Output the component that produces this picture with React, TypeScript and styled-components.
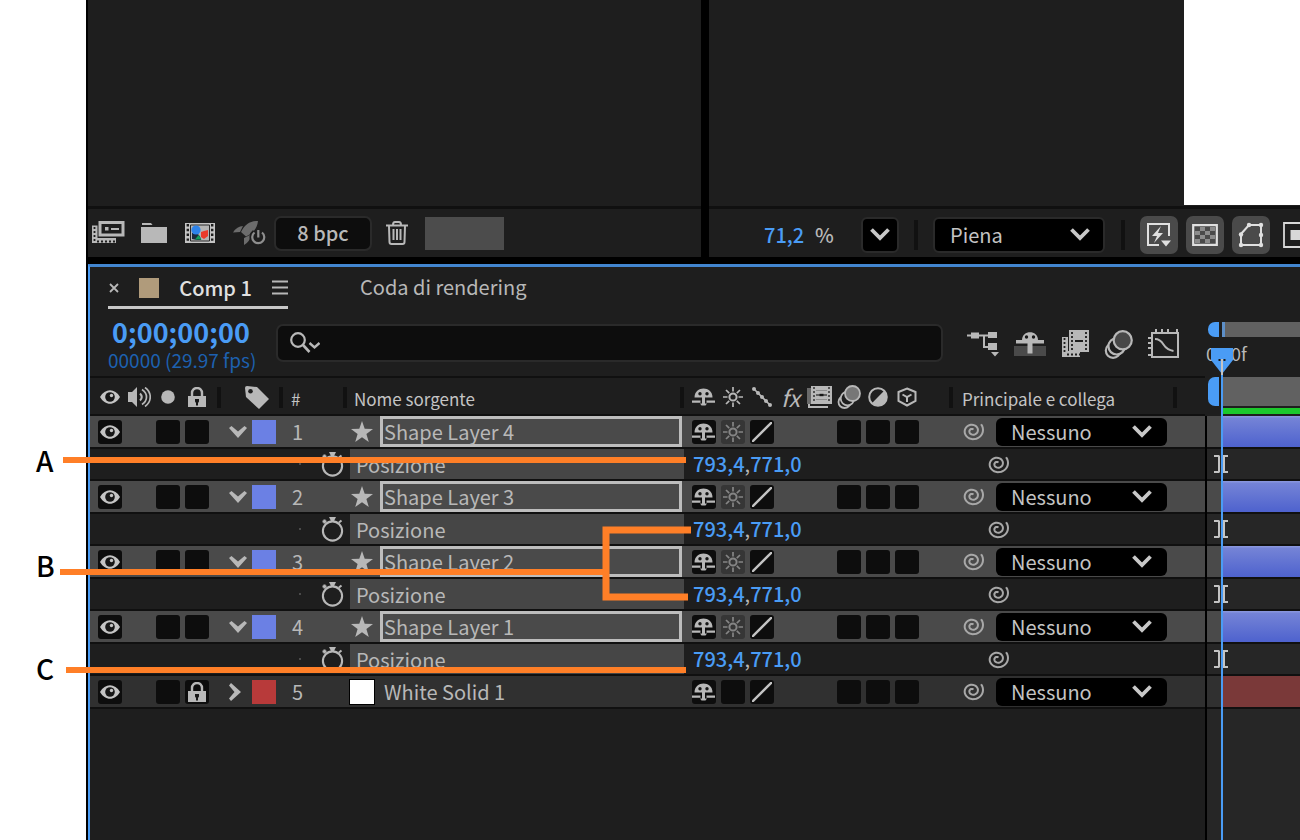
import React from "react";
import styled, { createGlobalStyle } from "styled-components";

const INK = "#b8b8b8";
const BLUE = "#4a9cf5";
const PANEL = "#1e1e1e";
const LINE = "#101010";
const ORANGE = "#ff7f27";

const GlobalStyle = createGlobalStyle`
  *, *::before, *::after { box-sizing: border-box; }
  body { margin: 0; background: #fff; }
  body, button, input, select, table {
    font-family: "Noto Sans CJK SC", "Noto Sans", sans-serif;
    font-size: 20px;
    line-height: 24px;
    font-weight: 500;
  }
  button { border: 0; padding: 0; background: none; color: inherit; cursor: pointer; }
  svg { display: block; flex: none; }
`;

/* ---------- page frame ---------- */

const Page = styled.div`
  position: relative;
  min-height: 100vh;
  padding-left: 86px;
  display: flex;
  overflow: hidden;
`;
const Workspace = styled.main`
  flex: 1;
  min-width: 0;
  padding-left: 2px;
  background: #000;
  color: ${INK};
  display: flex;
  flex-direction: column;
  gap: 7px;
`;
const UpperPanels = styled.div`
  display: flex;
  gap: 8px;
`;
const Panel = styled.section<{ $basis?: number }>`
  flex: ${(p) => (p.$basis ? `0 0 ${p.$basis}px` : "1")};
  min-width: 0;
  background: ${PANEL};
  overflow: hidden;
`;
const Stage = styled.div`
  height: 209px;
  border-bottom: 3px solid ${LINE};
  display: flex;
  justify-content: flex-end;
`;
const Canvas = styled.div`
  width: 116px;
  margin-bottom: 1px;
  background: #fff;
`;
const FootBar = styled.footer<{ $pad: number; $top?: number }>`
  height: 48px;
  display: flex;
  align-items: center;
  padding: ${(p) => p.$top ?? 0}px 0 0 ${(p) => p.$pad}px;
`;
const IconButton = styled.button<{ $gap?: number }>`
  flex: none;
  margin-right: ${(p) => p.$gap ?? 0}px;
`;
const DepthButton = styled.button`
  width: 98px;
  height: 35px;
  margin-right: 14px;
  background: #0d0d0d;
  border: 2px solid #2a2a2a;
  border-radius: 7px;
`;
const Swatch = styled.span<{ $w: number; $h: number; $color: string }>`
  display: block;
  flex: none;
  width: ${(p) => p.$w}px;
  height: ${(p) => p.$h}px;
  background: ${(p) => p.$color};
`;
const ZoomValue = styled.button`
  flex: none;
  width: 51px;
  text-align: left;
  color: ${BLUE};
`;
const Percent = styled.span`
  flex: none;
  width: 46px;
`;
const Separator = styled.span<{ $w?: number; $h?: number; $gap?: number }>`
  flex: none;
  width: ${(p) => p.$w ?? 4}px;
  height: ${(p) => p.$h ?? 21}px;
  margin-right: ${(p) => p.$gap ?? 0}px;
  background: #111;
`;
const Picker = styled.span<{ $w: number; $h: number; $gap?: number }>`
  flex: none;
  display: grid;
  align-items: center;
  width: ${(p) => p.$w}px;
  height: ${(p) => p.$h}px;
  margin-right: ${(p) => p.$gap ?? 0}px;
  > * { grid-area: 1 / 1; }
  > svg { justify-self: end; margin-right: ${(p) => (p.$w < 50 ? 9 : 15)}px; pointer-events: none; }
`;
const PickerSelect = styled.select<{ $framed?: boolean }>`
  appearance: none;
  width: 100%;
  height: 100%;
  padding: 0 0 0 15px;
  color: #c4c4c4;
  font-weight: 400;
  background: #000;
  border: ${(p) => (p.$framed ? "2px solid #2a2a2a" : "0")};
  border-radius: 6px;
`;
const ToggleButton = styled.button<{ $bare?: boolean }>`
  flex: none;
  width: 38px;
  height: 38px;
  margin-right: 8px;
  display: grid;
  place-items: center;
  border-radius: 7px;
  background: ${(p) => (p.$bare ? "transparent" : "#4a4a4a")};
`;

/* ---------- timeline panel ---------- */

const Timeline = styled.section`
  flex: 1;
  display: flex;
  flex-direction: column;
  background: ${PANEL};
  border-top: 3px solid #4285cf;
  border-left: 2px solid ${BLUE};
`;
const Tabs = styled.nav`
  height: 42px;
  padding-left: 18px;
  display: flex;
  align-items: flex-start;
  gap: 72px;
`;
const ActiveTab = styled.div`
  height: 42px;
  width: 180px;
  padding: 2px 0 0 1px;
  border-bottom: 3px solid #c8c8c8;
  display: flex;
  align-items: center;
  justify-content: space-between;
  color: #e0e0e0;
`;
const TabLabel = styled.button<{ $quiet?: boolean }>`
  height: 40px;
  white-space: nowrap;
  font-weight: ${(p) => (p.$quiet ? 400 : 500)};
`;
const Columns = styled.div`
  flex: 1;
  display: flex;
`;
const LayerPane = styled.div`
  flex: 0 0 1115px;
`;
const Tools = styled.div`
  height: 67px;
  padding: 0 25px 0 18px;
  display: flex;
  align-items: center;
`;
const TimeBlock = styled.div`
  width: 168px;
  padding-top: 2px;
  display: flex;
  flex-direction: column;
`;
const TimeCode = styled.button`
  padding-left: 4px;
  text-align: left;
  font-size: 27px;
  line-height: 32px;
  font-weight: 700;
  color: ${BLUE};
`;
const FrameRate = styled.span`
  font-size: 19px;
  font-weight: 400;
  color: #1d61b0;
  white-space: nowrap;
`;
const Search = styled.label`
  flex: 1;
  height: 38px;
  margin-right: 24px;
  padding-left: 12px;
  display: flex;
  align-items: center;
  background: #0d0d0d;
  border: 2px solid #2a2a2a;
  border-radius: 7px;
`;
const SearchInput = styled.input`
  flex: 1;
  min-width: 0;
  border: 0;
  outline: 0;
  background: transparent;
  color: ${INK};
`;
const ToolIcons = styled.div`
  display: flex;
  align-items: center;
  gap: 15px;
  padding-top: 3px;
`;

const LayerTable = styled.table`
  display: block;
`;
const Block = styled.thead`
  display: block;
`;
const Body = styled.tbody`
  display: block;
`;
const GRID = "116px 72px 64px 342px 232px 1fr";
const HeadRow = styled.tr`
  display: grid;
  grid-template-columns: ${GRID};
  height: 40px;
  padding-left: 5px;
  border-top: 2px solid ${LINE};
  border-bottom: 2px solid ${LINE};
`;
const HeadCell = styled.th<{ $pad?: number }>`
  display: flex;
  align-items: center;
  padding: 2px 0 0 ${(p) => p.$pad ?? 0}px;
  font-size: 17px;
  font-weight: 500;
  white-space: nowrap;
`;
const HeadText = styled.span`
  padding-top: 4px;
  font-weight: 400;
  color: #c4c4c4;
`;
const Slot = styled.span`
  flex: none;
  width: 29px;
  display: grid;
  place-items: center;
`;
const Spacer = styled.span`
  flex: 1;
`;
const LayerRow = styled.tr<{ $selected: boolean }>`
  display: grid;
  grid-template-columns: ${GRID};
  height: 33px;
  padding-left: 5px;
  border-bottom: 2px solid ${LINE};
  background: ${(p) => (p.$selected ? "#4a4a4a" : "#303030")};
`;
const PropertyRow = styled.tr`
  display: grid;
  grid-template-columns: 260px 334px 232px 1fr;
  height: 32px;
  border-bottom: 2px solid ${LINE};
`;
const Cell = styled.td<{ $pad?: number; $gap?: number }>`
  display: flex;
  align-items: center;
  padding: 0 0 0 ${(p) => p.$pad ?? 0}px;
  gap: ${(p) => p.$gap ?? 0}px;
  white-space: nowrap;
  font-weight: 400;
`;
const Well = styled.button<{ $dim?: boolean }>`
  width: 24px;
  height: 24px;
  display: grid;
  place-items: center;
  border-radius: 3px;
  background: ${(p) => (p.$dim ? "#363636" : "#0d0d0d")};
`;
const LayerName = styled.button<{ $selected: boolean }>`
  width: 302px;
  height: 31px;
  padding-left: 1px;
  text-align: left;
  font-weight: 400;
  border: 3px solid ${(p) => (p.$selected ? "#bdbdbd" : "transparent")};
`;
const SolidChip = styled.span`
  width: 26px;
  height: 26px;
  margin: 0 -2px;
  background: #fff;
  border: 1px solid #000;
`;
const PropertyLead = styled(Cell)`
  justify-content: flex-end;
  padding-right: 6px;
  gap: 20px;
`;
const Tick = styled.span`
  width: 2px;
  height: 2px;
  background: #4a4a4a;
`;
const PropertyName = styled(Cell)`
  padding: 2px 0 0 6px;
  background: #464646;
`;
const Value = styled.button`
  color: ${BLUE};
`;

/* ---------- tracks ---------- */

const TrackPane = styled.div`
  position: relative;
  flex: 1;
  min-width: 0;
  display: flex;
  flex-direction: column;
`;
const Ruler = styled.div`
  height: 107px;
  padding: 13px 0 2px;
  display: flex;
  flex-direction: column;
`;
const RulerBar = styled.div<{ $h: number }>`
  height: ${(p) => p.$h}px;
  display: flex;
  gap: 3px;
  padding-left: 3px;
`;
const Handle = styled.span`
  width: 11px;
  background: ${BLUE};
  border-radius: 7px 0 0 7px;
`;
const Range = styled.span<{ $edge?: boolean }>`
  flex: 1;
  background: #616161;
  border-left: ${(p) => (p.$edge ? "3px solid #5d8fc8" : "0")};
`;
const RulerText = styled.span`
  height: 40px;
  padding: 4px 0 0 1px;
  font-size: 18px;
  font-weight: 400;
`;
const CacheLine = styled.span`
  height: 6px;
  margin: 2px 0 0 17px;
  background: #1cc82c;
`;
const Tracks = styled.div`
  flex: 1;
  border-left: 2px solid #000;
  background: #262626;
`;
const Track = styled.div<{ $bg?: string; $h: number; $pad: number }>`
  height: ${(p) => p.$h}px;
  padding-left: ${(p) => p.$pad}px;
  border-bottom: 2px solid ${LINE};
  background: ${(p) => p.$bg ?? "transparent"};
  display: flex;
  align-items: center;
`;
const Clip = styled.div<{ $solid?: boolean }>`
  flex: 1;
  height: 100%;
  background: ${(p) => (p.$solid ? "#7a3939" : "linear-gradient(#8d9ade 0, #7483d6 8%, #4e62ce 100%)")};
`;
const PlayHead = styled.div`
  position: absolute;
  left: 6px;
  top: 38px;
  bottom: 0;
  width: 22px;
  display: flex;
  flex-direction: column;
  align-items: center;
`;
const PlayLine = styled.span`
  flex: 1;
  width: 2px;
  background: ${BLUE};
`;

/* ---------- callouts lying over the panel ---------- */

const CalloutLines = styled.svg`
  position: absolute;
  left: 0;
  top: 0;
  pointer-events: none;
`;
const CalloutLetter = styled.span<{ $y: number }>`
  position: absolute;
  left: 36px;
  top: ${(p) => p.$y}px;
  font-size: 28px;
  line-height: 32px;
  font-weight: 500;
  color: #000;
`;

/* ---------- icons ---------- */

const Chevron = () => (
  <svg width="20" height="13" viewBox="0 0 20 13" fill="none" stroke="#c8c8c8" strokeWidth="3.8">
    <path d="M1.500 1.500 10 10 18.500 1.500" />
  </svg>
);
const TwirlDown = () => (
  <svg width="18" height="12" viewBox="0 0 18 12" fill={INK}>
    <path d="M0 2 2.500 0 9 5.500 15.500 0 18 2 9 12Z" />
  </svg>
);
const TwirlRight = () => (
  <svg width="18" height="18" viewBox="0 0 18 18" fill={INK}>
    <path d="M2 0 0 2.500 5.500 9 0 15.500 2 18 12 9Z" />
  </svg>
);
const Eye = () => (
  <svg width="20" height="14" viewBox="0 0 20 14">
    <path d="M0 7C5-2 15-2 20 7 15 16 5 16 0 7Z" fill="#c4c4c4" />
    <circle cx="10" cy="7" r="4.800" fill="#161616" />
    <circle cx="11.500" cy="5.500" r="1.700" fill="#c4c4c4" />
  </svg>
);
const Speaker = () => (
  <svg width="24" height="20" viewBox="0 0 24 20" fill="none" stroke={INK} strokeWidth="2">
    <path d="M1 5h4l5-5v20l-5-5H1Z" fill={INK} stroke="none" />
    <path d="M13 6.500q3.500 3.500 0 7" />
    <path d="M15 2.500c6 4 6 11 0 15M18 .500c7 5 7 14 0 19" strokeWidth="1.700" />
  </svg>
);
const Disc = () => (
  <svg width="14" height="14" viewBox="0 0 14 14">
    <circle cx="7" cy="7" r="6.800" fill={INK} />
  </svg>
);
const Lock = () => (
  <svg width="18" height="20" viewBox="0 0 18 20">
    <path d="M4 10V6a5 5 0 0 1 10 0v4" fill="none" stroke={INK} strokeWidth="2.400" />
    <path d="M0 9h18v11H0Z" fill={INK} />
    <path d="M7 12h4v2.500l-1 1.500v2.500H8V16l-1-1.500Z" fill="#161616" />
  </svg>
);
const TagIcon = () => (
  <svg width="24" height="23" viewBox="0 0 24 23">
    <path d="M0 2Q0 0 2 0L12 1 24 13 14 23 1 11Z" fill={INK} />
    <circle cx="5.500" cy="5.200" r="2.300" fill={PANEL} />
  </svg>
);
const ShyFace = () => (
  <svg width="23" height="18" viewBox="0 0 23 18">
    <path d="M2.500 9.500C2.500-2.500 20.500-2.500 20.500 9.500Z" fill={INK} />
    <circle cx="8" cy="5.800" r="1.700" fill="#161616" />
    <circle cx="15" cy="5.800" r="1.700" fill="#161616" />
    <path d="M10 9h3v8h-3Z" fill={INK} />
    <path d="M0 12.500h8.500v2.200H0ZM14.500 12.500H23v2.200h-8.500ZM8 15.500h7l-1.500 2h-4Z" fill={INK} />
  </svg>
);
const ShyTool = () => (
  <svg width="32" height="26" viewBox="0 0 32 26">
    <path d="M0 15h32v10H0Z" fill="#4a4a4a" />
    <path d="M8 9C8-1.500 24-1.500 24 9Z" fill={INK} />
    <circle cx="12.500" cy="6" r="1.700" fill="#161616" />
    <circle cx="19.500" cy="6" r="1.700" fill="#161616" />
    <path d="M2 9h28v3.500H2Z" fill={INK} />
    <path d="M13.500 8h5v14.500h-5Z" fill={INK} />
  </svg>
);
const Sun = ({ color = INK }: { color?: string }) => (
  <svg width="20" height="20" viewBox="0 0 20 20" fill="none" stroke={color} strokeWidth="2">
    <circle cx="10" cy="10" r="3.600" />
    <path d="M10 0v4.500M10 15.500V20M0 10h4.500M15.500 10H20M3 3l3.200 3.200M13.800 13.800 17 17M17 3l-3.200 3.200M6.200 13.800 3 17" strokeWidth="1.700" />
  </svg>
);
const DottedSlope = () => (
  <svg width="20" height="20" viewBox="0 0 20 20" fill={INK}>
    <circle cx="2" cy="2" r="2" />
    <circle cx="6" cy="6" r="2" />
    <circle cx="10" cy="10" r="2" />
    <circle cx="14" cy="14" r="2" />
    <circle cx="18" cy="18" r="2" />
    <path d="M2 2l16 16" stroke={INK} strokeWidth="1.600" />
  </svg>
);
const Slash = () => (
  <svg width="20" height="20" viewBox="0 0 20 20" stroke="#c4c4c4" strokeWidth="2.400">
    <path d="M0 20 20 0" />
  </svg>
);
const EffectsMark = styled.i`
  font-size: 23px;
  line-height: 24px;
  font-weight: 400;
`;
const FrameBlend = () => (
  <svg width="25" height="22" viewBox="0 0 25 22">
    <path d="M0 2h4v16H0Z" fill="#6a6a6a" />
    <path d="M2 18v3h19" fill="none" stroke={INK} strokeWidth="2" />
    <path d="M4 0h21v18H4Z" fill={INK} />
    <path d="M7 1v16M22 1v16" stroke="#3a3a3a" strokeWidth="1.600" strokeDasharray="2 2" />
    <path d="M9 9h11" stroke="#3a3a3a" strokeWidth="1.400" />
    <path d="M12.500 9h4" stroke="#161616" strokeWidth="2.400" />
    <path d="M9 4.500h11M9 13.500h11" stroke="#8c8c8c" strokeWidth="1.200" />
  </svg>
);
const MotionBlur = ({ size = 24 }: { size?: number }) => (
  <svg width={size} height={size} viewBox="0 0 24 24" fill={PANEL} stroke={INK} strokeWidth="1.800">
    <circle cx="7.500" cy="17" r="6" />
    <circle cx="10.500" cy="13.500" r="6.800" />
    <circle cx="15.500" cy="8.500" r="7.500" fill={size > 24 ? "#484848" : "#777"} />
  </svg>
);
const Adjustment = () => (
  <svg width="20" height="20" viewBox="0 0 20 20">
    <circle cx="10" cy="10" r="8.800" fill={PANEL} stroke={INK} strokeWidth="2" />
    <path d="M16.400 3.600A9 9 0 0 1 3.600 16.400Z" fill={INK} />
  </svg>
);
const Cube = () => (
  <svg width="20" height="20" viewBox="0 0 20 20" fill="none" stroke={INK} strokeWidth="2">
    <path d="M10 1.500 18.500 5v9L10 18.500 1.500 14V5Z" />
    <path d="M5.500 7.500 10 10l4.500-2.500M10 10v5" />
  </svg>
);
const Star = () => (
  <svg width="22" height="21" viewBox="0 0 22 21" fill={INK}>
    <path d="M11 0l2.700 7.800L22 8l-6.600 5 2.400 8L11 16.200 4.200 21l2.400-8L0 8l8.300-.2Z" />
  </svg>
);
const Stopwatch = () => (
  <svg width="23" height="26" viewBox="0 0 23 26" fill="none" stroke={INK} strokeWidth="2.100">
    <circle cx="11.500" cy="15" r="9.600" />
    <path d="M8 1h7l-2 4h-3Z" fill={INK} stroke="none" />
    <path d="M1.500 5.500h4M3.500 3.500v4M18 6.500l2.500-2" />
  </svg>
);

const spiral = Array.from({ length: 61 }, (_, i) => {
  const t = i / 60;
  const angle = -0.7 + t * 12.3;
  const r = 11.2 - 9.7 * Math.pow(t, 0.9);
  return `${i ? "L" : "M"}${(11.5 + r * Math.cos(angle)).toFixed(2)} ${(9.8 + r * 0.92 * Math.sin(angle)).toFixed(2)}`;
}).join("");
const PickWhip = () => (
  <svg width="24" height="21" viewBox="0 0 24 21" fill="none" stroke="#a8a8a8" strokeWidth="2">
    <path d={spiral} />
  </svg>
);
const Footage = () => (
  <svg width="34" height="24" viewBox="0 0 34 24">
    <path d="M1 4.500h5.500V17H25v5H1Z" fill={INK} />
    <path d="M3.500 6v14M6 20.500h18" stroke={PANEL} strokeWidth="1.800" strokeDasharray="2 2" />
    <rect x="9" y="1.500" width="23" height="12.500" fill={PANEL} stroke={INK} strokeWidth="3" />
    <path d="M14 6h3.500v3.500H14ZM20 7h8v2h-8Z" fill={INK} />
  </svg>
);
const Folder = () => (
  <svg width="26" height="20" viewBox="0 0 26 20" fill={INK}>
    <path d="M1 0h9l1.500 2H1ZM0 4h26v16H0Z" />
  </svg>
);
const NewComp = () => (
  <svg width="30" height="20" viewBox="0 0 30 20">
    <path d="M0 0h30v20H0Z" fill="#c4c4c4" />
    <path d="M2.800 1v18M27.200 1v18" stroke="#1e1e1e" strokeWidth="2.400" strokeDasharray="2.400 2.400" />
    <path d="M5.500 2h19v16h-19Z" fill="#b4b4b4" stroke="#2a2a2a" strokeWidth="1" />
    <path d="M7 10q8-1 9 7h-4l-5-1Z" fill="#1b2a3c" />
    <circle cx="11" cy="7" r="4.600" fill="#2d83ea" />
    <path d="M16 9l3-1 4-1v6l-4 3-3-2Z" fill="#ea3b2b" />
    <path d="M10 16.500l3.500-4.500 3 4.500Z" fill="#12a05a" />
  </svg>
);
const Rocket = () => (
  <svg width="33" height="26" viewBox="0 0 33 26">
    <path d="M25 1C17 1 12 4 8 12l5 4.500C20 13 24 9 25 1ZM0 12.500Q4 6 10 6L7 12ZM11 25v-7l6-3q1 6-6 10Z" fill="#6c6c6c" />
    <path d="M21.500 12a6.300 6.300 0 1 0 7.500 0M25.300 9v8" fill="none" stroke={PANEL} strokeWidth="5" />
    <path d="M21.500 12.500a6 6 0 1 0 7.500 0M25.300 10v7.500" fill="none" stroke="#8e8e8e" strokeWidth="2.200" />
  </svg>
);
const Trash = () => (
  <svg width="22" height="24" viewBox="0 0 22 24" fill="none" stroke={INK} strokeWidth="2">
    <path d="M0 4.500h22M7 4q0-3 2-3h4q2 0 2 3M3 5l.500 16q0 2 2 2h11q2 0 2-2L19 5M7.500 8v11M11 8v11M14.500 8v11" />
  </svg>
);
const FastPreview = () => (
  <svg width="26" height="26" viewBox="0 0 26 26">
    <path d="M13 23H2V2h21v12" fill="none" stroke="#e0e0e0" strokeWidth="2" />
    <path d="M15 4 6 14h5l-3 7 9-10h-5Z" fill="#e0e0e0" />
    <path d="M15 18.500h10l-5 6Z" fill="#e0e0e0" />
  </svg>
);
const Transparency = () => (
  <svg width="26" height="22" viewBox="0 0 26 22">
    <path d="M1.200 1.200h23.600v19.600H1.200Z" fill="#4a4a4a" stroke="#e0e0e0" strokeWidth="2.200" />
    <path d="M8 3h5v4H8ZM18 3h5v4h-5ZM3 7h5v4H3ZM13 7h5v4h-5ZM8 11h5v4H8ZM18 11h5v4h-5ZM3 15h5v4H3ZM13 15h5v4h-5Z" fill="#8c8c8c" />
  </svg>
);
const MaskShape = () => (
  <svg width="26" height="26" viewBox="0 0 26 26">
    <path d="M3 23V12L11 3h12v20Z" fill="none" stroke="#e0e0e0" strokeWidth="2" />
    <g fill="#e0e0e0">
      <circle cx="3" cy="23" r="2.200" />
      <circle cx="3" cy="12.500" r="2.200" />
      <circle cx="11" cy="3" r="2.200" />
      <circle cx="23" cy="3" r="2.200" />
      <circle cx="23" cy="13" r="2.200" />
      <circle cx="23" cy="23" r="2.200" />
    </g>
  </svg>
);
const Region = () => (
  <svg width="28" height="26" viewBox="0 0 28 26">
    <path d="M1 1h26v24H1Z" fill="none" stroke="#d8d8d8" strokeWidth="1.800" />
    <path d="M7.500 8h13v10h-13Z" fill="#d8d8d8" />
  </svg>
);
const Magnifier = () => (
  <svg width="30" height="22" viewBox="0 0 30 22" fill="none" stroke={INK}>
    <circle cx="8" cy="8" r="6.800" strokeWidth="2.200" />
    <path d="M13 13l6.500 7" strokeWidth="2.600" />
    <path d="M19.500 11l5 4.500 5-4.500" strokeWidth="2.400" />
  </svg>
);
const FlowChart = () => (
  <svg width="32" height="26" viewBox="0 0 32 26" fill={INK}>
    <path d="M0 3.500h10v2H0ZM4 1.500h8v6H4ZM12 3.500h10v2H12ZM21 1h9v6h-9ZM21 12h9v7h-9ZM24 21h8l-4 4.500Z" />
    <path d="M17 4v12h5" fill="none" stroke={INK} strokeWidth="2" />
  </svg>
);
const FrameBlendTool = () => (
  <svg width="28" height="28" viewBox="0 0 28 28">
    <path d="M1 7h6v14h12v6H1Z" fill={INK} />
    <path d="M3.500 8v16M6 24.500h13" stroke={PANEL} strokeWidth="1.800" strokeDasharray="2 2" />
    <path d="M8 0h20v22H8Z" fill={INK} />
    <path d="M11 2v19M25 2v19" stroke={PANEL} strokeWidth="1.800" strokeDasharray="2 2" />
    <path d="M14 11h8" stroke={PANEL} strokeWidth="2" />
  </svg>
);
const GraphEditor = () => (
  <svg width="32" height="30" viewBox="0 0 32 30" fill="none" stroke={INK} strokeWidth="2">
    <path d="M4 4h26v24H4ZM8 0v4M14 0v4M20 0v4M29 0v4M0 9h4M0 14h4M0 19h4M0 26h4" />
    <path d="M7 10q5 0 8.500 5.500t10 6.500" />
  </svg>
);
const Burger = () => (
  <svg width="16" height="15" viewBox="0 0 16 15" stroke={INK} strokeWidth="2">
    <path d="M0 1.500h16M0 7.500h16M0 13.500h16" />
  </svg>
);
const Cross = () => (
  <svg width="10" height="10" viewBox="0 0 10 10" stroke={INK} strokeWidth="1.800">
    <path d="M1 1l8 8M9 1 1 9" />
  </svg>
);
const IBeam = () => (
  <svg width="14" height="18" viewBox="0 0 14 18" stroke="#c4c4c4" strokeWidth="2" fill="none">
    <path d="M0 1h5.500M8.500 1H14M0 17h5.500M8.500 17H14M5 1v16M10 1v16" />
  </svg>
);
const HeadMarker = () => (
  <svg width="22" height="28" viewBox="0 0 22 28">
    <path d="M0 1h22v12L11 27 0 13Z" fill={BLUE} />
    <path d="M11 12v16" stroke="#c4c4c4" strokeWidth="2" />
    <path d="M7.500 13h2M12.500 13h2" stroke="#161616" strokeWidth="2" />
  </svg>
);

/* ---------- data ---------- */

type Layer = { n: number; name: string; solid?: boolean; value?: [string, string] };
const layers: Layer[] = [
  { n: 1, name: "Shape Layer 4", value: ["793,4", "771,0"] },
  { n: 2, name: "Shape Layer 3", value: ["793,4", "771,0"] },
  { n: 3, name: "Shape Layer 2", value: ["793,4", "771,0"] },
  { n: 4, name: "Shape Layer 1", value: ["793,4", "771,0"] },
  { n: 5, name: "White Solid 1", solid: true },
];

function LayerLine({ layer }: { layer: Layer }) {
  const selected = !layer.solid;
  return (
    <LayerRow $selected={selected}>
      <Cell>
        <Slot><Well aria-label="Video"><Eye /></Well></Slot>
        <Slot />
        <Slot><Well aria-label="Solo" /></Slot>
        <Slot><Well aria-label="Lock">{layer.solid && <Lock />}</Well></Slot>
      </Cell>
      <Cell $pad={18} $gap={5}>
        <IconButton aria-label="Expand">{layer.solid ? <TwirlRight /> : <TwirlDown />}</IconButton>
        <Swatch $w={24} $h={24} $color={layer.solid ? "#b83a3a" : "#6b80e4"} />
      </Cell>
      <Cell $pad={9}>{layer.n}</Cell>
      <Cell $pad={4} $gap={7}>
        {layer.solid ? <SolidChip /> : <Star />}
        <LayerName $selected={selected}>{layer.name}</LayerName>
      </Cell>
      <Cell>
        <Slot><Well aria-label="Shy"><ShyFace /></Well></Slot>
        <Slot><Well aria-label="Collapse" $dim={selected}>{selected && <Sun color="#858585" />}</Well></Slot>
        <Slot><Well aria-label="Quality"><Slash /></Well></Slot>
        <Slot />
        <Slot />
        <Slot><Well aria-label="Motion blur" /></Slot>
        <Slot><Well aria-label="Adjustment" /></Slot>
        <Slot><Well aria-label="3D" /></Slot>
      </Cell>
      <Cell $pad={40} $gap={11}>
        <IconButton aria-label="Pick whip"><PickWhip /></IconButton>
        <Picker $w={171} $h={28}>
          <PickerSelect aria-label="Principale e collega"><option>Nessuno</option></PickerSelect>
          <Chevron />
        </Picker>
      </Cell>
    </LayerRow>
  );
}

function PropertyLine({ value }: { value: [string, string] }) {
  return (
    <PropertyRow>
      <PropertyLead><Tick /><IconButton aria-label="Stopwatch"><Stopwatch /></IconButton></PropertyLead>
      <PropertyName>Posizione</PropertyName>
      <Cell $pad={9}><Value>{value[0]}</Value>,<Value>{value[1]}</Value></Cell>
      <Cell $pad={70}><IconButton aria-label="Pick whip"><PickWhip /></IconButton></Cell>
    </PropertyRow>
  );
}

export default function App() {
  return (
    <Page>
      <GlobalStyle />
      <Workspace>
        <UpperPanels>
          <Panel $basis={613}>
            <Stage />
            <FootBar $pad={3}>
              <IconButton $gap={16} aria-label="Interpret footage"><Footage /></IconButton>
              <IconButton $gap={18} aria-label="New folder"><Folder /></IconButton>
              <IconButton $gap={18} aria-label="New composition"><NewComp /></IconButton>
              <IconButton $gap={8} aria-label="Render settings"><Rocket /></IconButton>
              <DepthButton>8 bpc</DepthButton>
              <IconButton $gap={17} aria-label="Delete"><Trash /></IconButton>
              <Swatch $w={79} $h={33} $color="#4c4c4c" />
            </FootBar>
          </Panel>
          <Panel>
            <Stage><Canvas /></Stage>
            <FootBar $pad={55} $top={3}>
              <ZoomValue>71,2</ZoomValue>
              <Percent>%</Percent>
              <Picker $w={38} $h={36} $gap={15}>
                <PickerSelect $framed aria-label="Zoom" />
                <Chevron />
              </Picker>
              <Separator $w={4} $h={30} $gap={15} />
              <Picker $w={172} $h={36} $gap={16}>
                <PickerSelect $framed aria-label="Resolution"><option>Piena</option></PickerSelect>
                <Chevron />
              </Picker>
              <Separator $w={4} $h={30} $gap={15} />
              <ToggleButton aria-label="Fast previews"><FastPreview /></ToggleButton>
              <ToggleButton aria-label="Transparency grid"><Transparency /></ToggleButton>
              <ToggleButton aria-label="Mask visibility"><MaskShape /></ToggleButton>
              <ToggleButton aria-label="Region of interest" $bare><Region /></ToggleButton>
            </FootBar>
          </Panel>
        </UpperPanels>

        <Timeline>
          <Tabs>
            <ActiveTab>
              <IconButton aria-label="Close"><Cross /></IconButton>
              <Swatch $w={20} $h={20} $color="#b09b7b" />
              <TabLabel>Comp 1</TabLabel>
              <IconButton aria-label="Menu"><Burger /></IconButton>
            </ActiveTab>
            <TabLabel $quiet>Coda di rendering</TabLabel>
          </Tabs>
          <Columns>
            <LayerPane>
              <Tools>
                <TimeBlock>
                  <TimeCode>0;00;00;00</TimeCode>
                  <FrameRate>00000 (29.97 fps)</FrameRate>
                </TimeBlock>
                <Search>
                  <Magnifier />
                  <SearchInput aria-label="Search" />
                </Search>
                <ToolIcons>
                  <IconButton aria-label="Flowchart"><FlowChart /></IconButton>
                  <IconButton aria-label="Hide shy layers"><ShyTool /></IconButton>
                  <IconButton aria-label="Frame blending"><FrameBlendTool /></IconButton>
                  <IconButton aria-label="Motion blur"><MotionBlur size={29} /></IconButton>
                  <IconButton aria-label="Graph editor"><GraphEditor /></IconButton>
                </ToolIcons>
              </Tools>
              <LayerTable>
                <Block>
                  <HeadRow>
                    <HeadCell>
                      <Slot><Eye /></Slot>
                      <Slot><Speaker /></Slot>
                      <Slot><Disc /></Slot>
                      <Slot><Lock /></Slot>
                    </HeadCell>
                    <HeadCell $pad={6}>
                      <Separator $gap={24} />
                      <TagIcon />
                      <Spacer />
                      <Separator />
                    </HeadCell>
                    <HeadCell $pad={8}>
                      <HeadText>#</HeadText>
                      <Spacer />
                      <Separator />
                    </HeadCell>
                    <HeadCell $pad={7}>
                      <HeadText>Nome sorgente</HeadText>
                      <Spacer />
                      <Separator $gap={5} />
                    </HeadCell>
                    <HeadCell>
                      <Slot><ShyFace /></Slot>
                      <Slot><Sun /></Slot>
                      <Slot><DottedSlope /></Slot>
                      <Slot><EffectsMark>fx</EffectsMark></Slot>
                      <Slot><FrameBlend /></Slot>
                      <Slot><MotionBlur /></Slot>
                      <Slot><Adjustment /></Slot>
                      <Slot><Cube /></Slot>
                    </HeadCell>
                    <HeadCell $pad={28}>
                      <Separator $gap={9} />
                      <HeadText>Principale e collega</HeadText>
                      <Spacer />
                      <Separator $gap={28} />
                    </HeadCell>
                  </HeadRow>
                </Block>
                <Body>
                  {layers.map((l) => (
                    <React.Fragment key={l.n}>
                      <LayerLine layer={l} />
                      {l.value && <PropertyLine value={l.value} />}
                    </React.Fragment>
                  ))}
                </Body>
              </LayerTable>
            </LayerPane>
            <TrackPane>
              <Ruler>
                <RulerBar $h={15}><Handle /><Range $edge /></RulerBar>
                <RulerText>0:00f</RulerText>
                <RulerBar $h={29}><Handle /><Range /></RulerBar>
                <CacheLine />
              </Ruler>
              <Tracks>
                {layers.map((l) => (
                  <React.Fragment key={l.n}>
                    <Track $h={33} $pad={15} $bg={l.solid ? "#303030" : "#4a4a4a"}><Clip $solid={l.solid} /></Track>
                    {l.value && <Track $h={32} $pad={7}><IBeam /></Track>}
                  </React.Fragment>
                ))}
              </Tracks>
              <PlayHead><HeadMarker /><PlayLine /></PlayHead>
            </TrackPane>
          </Columns>
        </Timeline>
      </Workspace>

      <CalloutLines width="700" height="700" viewBox="0 0 700 700" fill="none" stroke={ORANGE} strokeWidth="6">
        <path d="M63 460H686" />
        <path d="M60 572H606" />
        <path d="M691 530H606V597H688" strokeWidth="7" />
        <path d="M66 670H686" />
      </CalloutLines>
      <CalloutLetter $y={444}>A</CalloutLetter>
      <CalloutLetter $y={549}>B</CalloutLetter>
      <CalloutLetter $y={652}>C</CalloutLetter>
    </Page>
  );
}
